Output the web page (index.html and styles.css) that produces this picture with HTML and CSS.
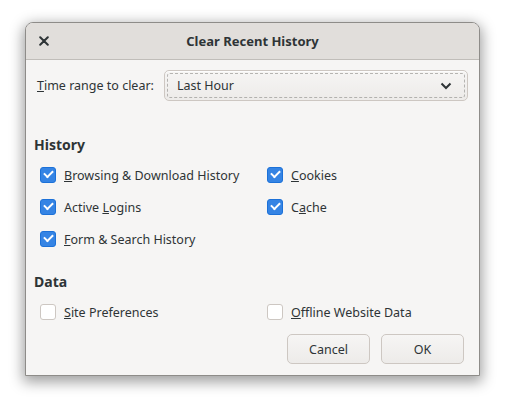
FILE: index.html
```html
<!DOCTYPE html>
<html>
<head>
<meta charset="utf-8">
<link rel="stylesheet" href="styles.css">
</head>
<body>
<div class="stage">
  <div class="dialog">
    <div class="titlebar">
      <span class="close">
        <svg width="10" height="10" viewBox="0 0 10 10"><path d="M1.2 1.2 L8.8 8.8 M8.8 1.2 L1.2 8.8" stroke="#2e3436" stroke-width="2" stroke-linecap="round"/></svg>
      </span>
      <span class="title">Clear Recent History</span>
    </div>
    <div class="content">
      <div class="range-row">
        <span class="range-label"><u>T</u>ime range to clear:</span>
        <div class="select">
          <span>Last Hour</span>
          <svg class="chev" width="12" height="8" viewBox="0 0 12 8"><path d="M1.5 1.5 L6 6 L10.5 1.5" fill="none" stroke="#2e3436" stroke-width="2"/></svg>
        </div>
      </div>
      <h2 class="section first">History</h2>
      <div class="grid">
        <label class="item"><span class="box on"></span><span><u>B</u>rowsing &amp; Download History</span></label>
        <label class="item"><span class="box on"></span><span><u>C</u>ookies</span></label>
        <label class="item"><span class="box on"></span><span>Active <u>L</u>ogins</span></label>
        <label class="item"><span class="box on"></span><span>C<u>a</u>che</span></label>
        <label class="item"><span class="box on"></span><span><u>F</u>orm &amp; Search History</span></label>
        <span></span>
      </div>
      <h2 class="section">Data</h2>
      <div class="grid">
        <label class="item"><span class="box"></span><span><u>S</u>ite Preferences</span></label>
        <label class="item"><span class="box"></span><span><u>O</u>ffline Website Data</span></label>
      </div>
      <div class="buttons">
        <button class="btn">Cancel</button>
        <button class="btn">OK</button>
      </div>
    </div>
  </div>
</div>
</body>
</html>
```
FILE: styles.css
```css
html, body {
  margin: 0;
  padding: 0;
  background: #ffffff;
}
body {
  font-family: "Noto Sans", "Open Sans", sans-serif;
  font-size: 12.5px;
  color: #2e3436;
  min-height: 405px;
}
.stage {
  padding: 22px 0 0 25px;
}
.dialog {
  width: 453px;
  height: 352px;
  border: 1px solid #8e8c89;
  border-radius: 8px 8px 0 0;
  background: #f6f5f4;
  box-shadow: 0 4px 14px 2px rgba(0, 0, 0, 0.38);
  display: flex;
  flex-direction: column;
}
.titlebar {
  height: 36px;
  background: #e1dedb;
  border-bottom: 1px solid #c0bdb9;
  border-radius: 7px 7px 0 0;
  display: flex;
  align-items: center;
  position: relative;
}
.close {
  width: 10px;
  height: 10px;
  margin-left: 13px;
  display: flex;
}
.title {
  position: absolute;
  left: 0;
  right: 0;
  text-align: center;
  font-weight: bold;
  font-size: 13px;
  pointer-events: none;
}
.content {
  padding: 10px 11px 0 8px;
  display: flex;
  flex-direction: column;
}
.range-row {
  display: flex;
  align-items: center;
  gap: 10px;
  padding-left: 3px;
}
.range-label {
  white-space: nowrap;
}
.select {
  flex: 1;
  height: 29px;
  border: 1px solid #cdc7c2;
  border-radius: 5px;
  background: linear-gradient(#f6f5f4, #edebe9);
  box-shadow: inset 0 1px rgba(255, 255, 255, 0.8);
  display: flex;
  align-items: center;
  justify-content: space-between;
  padding: 0 15px 0 12px;
  position: relative;
}
.select::after {
  content: "";
  position: absolute;
  inset: 2px;
  border: 1px dashed #9a9996;
  border-radius: 3px;
  opacity: 0.7;
}
.section {
  font-size: 14px;
  font-weight: bold;
  margin: 0;
  padding: 0;
}
.section.first {
  margin-top: 34px;
}
.grid {
  display: grid;
  grid-template-columns: 227px 1fr;
  margin-top: 5px;
  padding-left: 6px;
}
.item {
  display: flex;
  align-items: center;
  gap: 8px;
  height: 32px;
  white-space: nowrap;
}
.box {
  width: 14px;
  height: 14px;
  border: 1px solid #cdc7c2;
  border-radius: 3px;
  background: #ffffff;
  flex: none;
  position: relative;
}
.box.on {
  background: #3584e4;
  border-color: #1c71d8;
}
.box.on::after {
  content: "";
  position: absolute;
  left: 3px;
  top: 2px;
  width: 7px;
  height: 4px;
  border-left: 2px solid #ffffff;
  border-bottom: 2px solid #ffffff;
  transform: rotate(-45deg);
}
.grid + .section {
  margin-top: 17px;
}
.buttons {
  display: flex;
  justify-content: flex-end;
  gap: 11px;
  margin-top: 6px;
  padding-right: 4px;
}
.btn {
  width: 83px;
  height: 30px;
  border: 1px solid #cdc7c2;
  border-radius: 5px;
  background: linear-gradient(#f6f5f4, #edebe9);
  font-family: inherit;
  font-size: 12.5px;
  color: #2e3436;
  padding: 0;
}
```
